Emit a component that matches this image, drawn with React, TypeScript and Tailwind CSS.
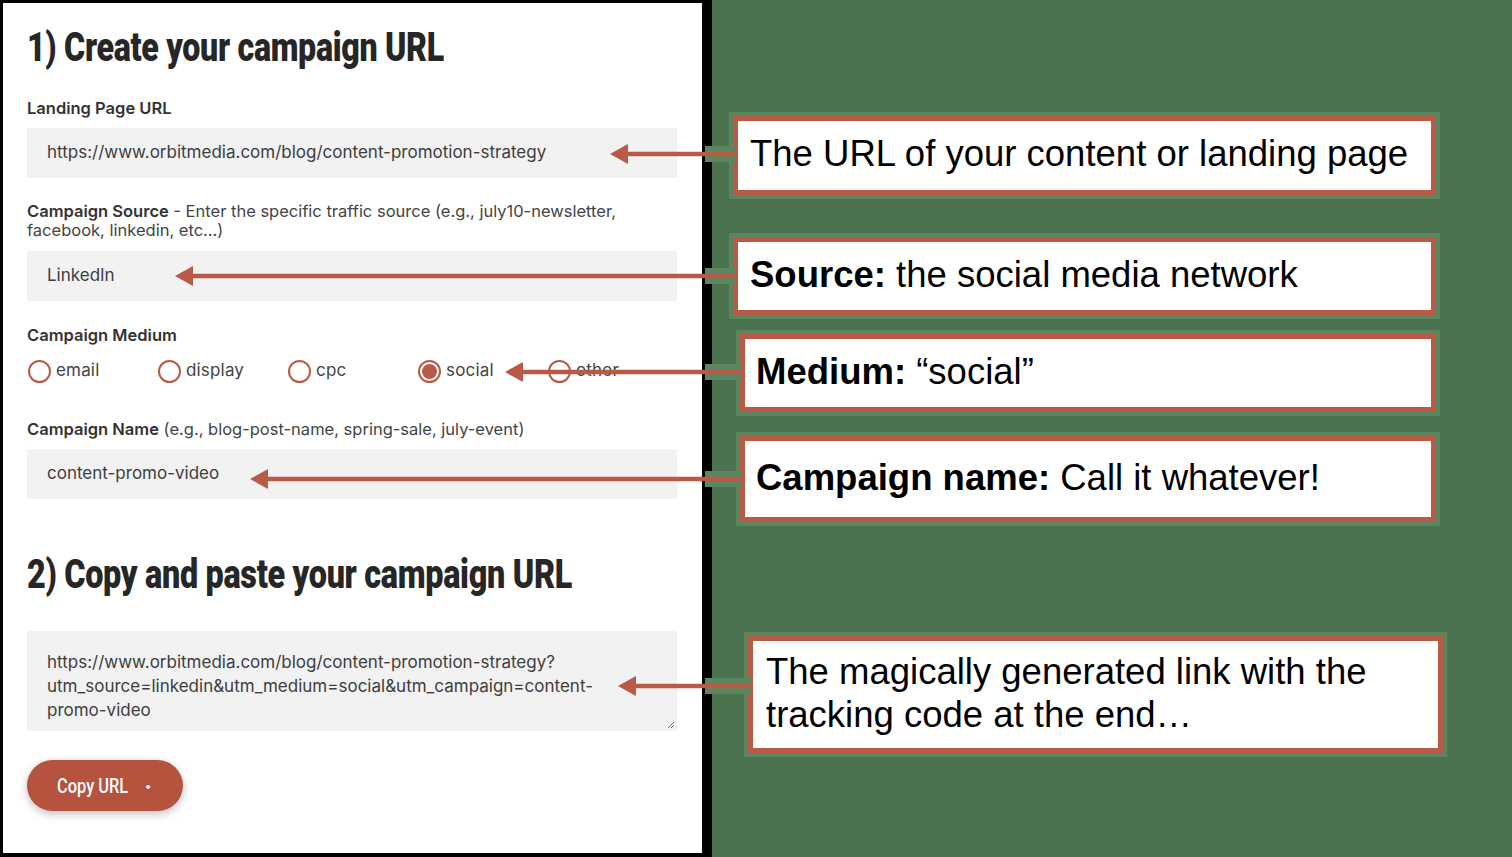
import React from "react";

const RED = "#b95a46";
const HALO = "#5a875f";

const arrows = [
  { y: 154, tip: 610, end: 735 },
  { y: 276, tip: 175, end: 735 },
  { y: 372, tip: 505, end: 742 },
  { y: 479, tip: 250, end: 742 },
  { y: 686, tip: 618, end: 752 },
];

function Radio({ label, checked }: { label: string; checked?: boolean }) {
  return (
    <div className="flex w-[130px] items-center gap-[5px]">
      <span className="flex h-[23px] w-[23px] items-center justify-center rounded-full border-2 border-[#b95a46] bg-white">
        {checked && <span className="h-[15px] w-[15px] rounded-full bg-[#b95a46]" />}
      </span>
      <span className="text-[17px] tracking-[0.01em] text-[#444]">{label}</span>
    </div>
  );
}

function Field({ value }: { value: string }) {
  return (
    <div className="flex h-[50px] w-[650px] items-center bg-[#f2f2f2] px-[20px] text-[17px] text-[#3d3d3d]">
      {value}
    </div>
  );
}

function Callout({
  children,
  className,
  inner,
}: {
  children: React.ReactNode;
  className: string;
  inner: string;
}) {
  return (
    <div className={`bg-[#5a875f] p-[4px] ${className}`}>
      <div className={`flex h-full flex-col justify-center border-[5px] border-[#b95a46] bg-white pb-[3px] font-['Liberation_Sans',Arial,sans-serif] text-[36.5px] text-black ${inner}`}>
        {children}
      </div>
    </div>
  );
}

export default function App() {
  return (
    <div className="relative flex h-[857px] w-[1512px] overflow-hidden bg-black">
      {/* Left form panel */}
      <div className="mb-[4px] ml-[3px] mt-[3px] flex w-[699px] flex-col bg-white pl-[24px] pt-[21px] font-['Inter',sans-serif]">
        <div className="h-[48px]">
          <h1 className="inline-block origin-left scale-x-[0.805] whitespace-nowrap font-['Roboto',sans-serif] text-[40px] font-black leading-[48px] tracking-[-0.01em] text-[#262626]">
            1) Create your campaign URL
          </h1>
        </div>

        <div className="mt-[26px] text-[16.5px] font-semibold leading-[20px] text-[#333]">Landing Page URL</div>
        <div className="mt-[10px]">
          <Field value="https://www.orbitmedia.com/blog/content-promotion-strategy" />
        </div>

        <div className="mt-[24px] w-[620px] text-[16.5px] leading-[19px] text-[#444]">
          <b className="font-semibold text-[#333]">Campaign Source</b> - Enter the specific traffic source (e.g., july10-newsletter, facebook, linkedin, etc...)
        </div>
        <div className="mt-[11px]">
          <Field value="LinkedIn" />
        </div>

        <div className="mt-[24px] text-[16.5px] font-semibold leading-[20px] text-[#333]">Campaign Medium</div>
        <div className="mt-[15px] flex h-[22px] items-center pl-[1px]">
          <Radio label="email" />
          <Radio label="display" />
          <Radio label="cpc" />
          <Radio label="social" checked />
          <Radio label="other" />
        </div>

        <div className="mt-[37px] text-[16.5px] leading-[20px] text-[#444]">
          <b className="font-semibold text-[#333]">Campaign Name</b> (e.g., blog-post-name, spring-sale, july-event)
        </div>
        <div className="mt-[10px]">
          <Field value="content-promo-video" />
        </div>

        <div className="mt-[52px] h-[48px]">
          <h2 className="inline-block origin-left scale-x-[0.81] whitespace-nowrap font-['Roboto',sans-serif] text-[40px] font-black leading-[48px] tracking-[-0.01em] text-[#262626]">
            2) Copy and paste your campaign URL
          </h2>
        </div>

        <div className="relative mt-[32px] h-[100px] w-[650px] bg-[#f2f2f2] px-[20px] pt-[19px] text-[17px] leading-[24px] text-[#3d3d3d]">
          <div>https://www.orbitmedia.com/blog/content-promotion-strategy?</div>
          <div>utm_source=linkedin&amp;utm_medium=social&amp;utm_campaign=content-</div>
          <div>promo-video</div>
          <svg className="absolute bottom-[2px] right-[2px]" width="8" height="8" viewBox="0 0 8 8">
            <path d="M1 7 L7 1 M4 7 L7 4" stroke="#777" strokeWidth="1" />
          </svg>
        </div>

        <div className="mt-[29px]">
          <button className="flex h-[51px] w-[156px] items-center rounded-full bg-[#b5533f] pl-[30px] text-white shadow-[0_3px_8px_rgba(0,0,0,0.25)]">
            <span className="inline-block origin-left scale-x-[0.82] whitespace-nowrap font-['Roboto',sans-serif] text-[20px] font-medium">
              Copy URL
            </span>
            <span className="ml-[1px] text-[12px]">•</span>
          </button>
        </div>
      </div>

      {/* Black divider */}
      <div className="w-[10px]" />

      {/* Green annotation area */}
      <div className="flex flex-1 flex-col bg-[#4b7350] pt-[112px]">
        <Callout className="ml-[17px] h-[87px] w-[711px]" inner="pl-[12px]">
          <div className="leading-[40px]">The URL of your content or landing page</div>
        </Callout>
        <Callout className="ml-[17px] mt-[34px] h-[86px] w-[711px]" inner="pl-[12px]">
          <div className="leading-[40px]">
            <b>Source:</b> the social media network
          </div>
        </Callout>
        <Callout className="ml-[24px] mt-[11px] h-[86px] w-[704px]" inner="pl-[11px]">
          <div className="leading-[40px]">
            <b>Medium:</b> “social”
          </div>
        </Callout>
        <Callout className="ml-[24px] mt-[16px] h-[94px] w-[704px]" inner="pl-[11px]">
          <div className="leading-[40px]">
            <b>Campaign name:</b> Call it whatever!
          </div>
        </Callout>
        <Callout className="ml-[32px] mt-[106px] h-[125px] w-[703px]" inner="pl-[13px]">
          <div className="leading-[43px]">
            The magically generated link with the
            <br />
            tracking code at the end…
          </div>
        </Callout>
      </div>

      {/* Arrow overlay */}
      <svg className="pointer-events-none absolute left-0 top-0" width="1512" height="857" viewBox="0 0 1512 857">
        {arrows.map((a, i) => (
          <g key={i}>
            <rect x={705} y={a.y - 8} width={a.end - 705} height={16} fill={HALO} />
            <line x1={a.tip + 14} y1={a.y} x2={a.end} y2={a.y} stroke={RED} strokeWidth={4.5} />
            <polygon points={`${a.tip},${a.y} ${a.tip + 18},${a.y - 10} ${a.tip + 18},${a.y + 10}`} fill={RED} />
          </g>
        ))}
      </svg>
    </div>
  );
}
